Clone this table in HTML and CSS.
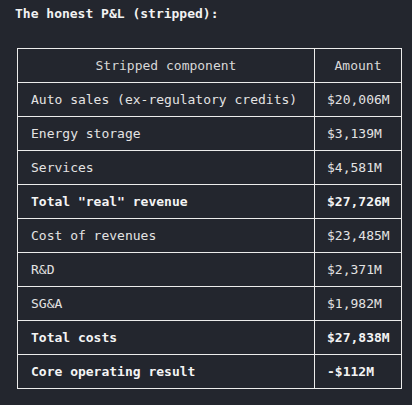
FILE: index.html
```html
<!DOCTYPE html>
<html lang="en">

<head>
    <meta charset="UTF-8">
    <title>The honest P&amp;L</title>
    <link rel="stylesheet" href="styles.css">
</head>

<body>
    <p class="title">The honest P&amp;L (stripped):</p>

    <table class="pl">
        <thead>
            <tr>
                <th>Stripped component</th>
                <th class="amount">Amount</th>
            </tr>
        </thead>
        <tbody>
            <tr>
                <td>Auto sales (ex-regulatory credits)</td>
                <td class="amount">$20,006M</td>
            </tr>
            <tr>
                <td>Energy storage</td>
                <td class="amount">$3,139M</td>
            </tr>
            <tr>
                <td>Services</td>
                <td class="amount">$4,581M</td>
            </tr>
            <tr class="total">
                <td>Total "real" revenue</td>
                <td class="amount">$27,726M</td>
            </tr>
            <tr>
                <td>Cost of revenues</td>
                <td class="amount">$23,485M</td>
            </tr>
            <tr>
                <td>R&amp;D</td>
                <td class="amount">$2,371M</td>
            </tr>
            <tr>
                <td>SG&amp;A</td>
                <td class="amount">$1,982M</td>
            </tr>
            <tr class="total">
                <td>Total costs</td>
                <td class="amount">$27,838M</td>
            </tr>
            <tr class="total">
                <td>Core operating result</td>
                <td class="amount">-$112M</td>
            </tr>
        </tbody>
    </table>
</body>

</html>
```

FILE: styles.css
```css
* {
    margin: 0;
    padding: 0;
    box-sizing: border-box;
}

body {
    background: #23262e;
    color: #e3e3e3;
    font-family: 'DejaVu Sans Mono', monospace;
    font-size: 13px;
    padding: 4px 15px;
}

.title {
    font-weight: bold;
    color: #f2f2f2;
    line-height: 20px;
}

.pl {
    margin-top: 24px;
    margin-left: 2px;
    width: 385px;
    border-collapse: collapse;
}

.pl th,
.pl td {
    border: 1px solid #ececec;
    height: 34px;
    padding: 0 13px;
    white-space: nowrap;
    text-align: left;
}

.pl th {
    font-weight: normal;
    text-align: center;
    color: #d8d8d8;
}

.pl .amount {
    width: 87px;
    padding: 0 10px 0 12px;
}

.pl th.amount {
    padding: 0 11px;
}

.total td {
    font-weight: bold;
    color: #f4f4f4;
}
```
